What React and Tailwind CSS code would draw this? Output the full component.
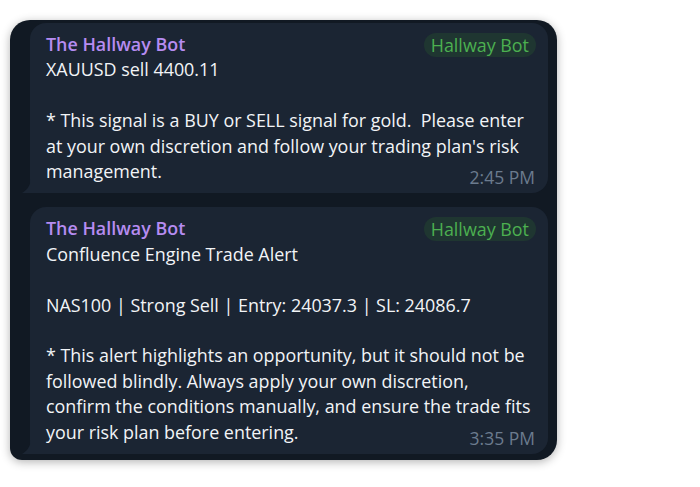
export default function App() {
  return (
    <div className="min-h-[487px] w-[700px] bg-white pl-[10px] pt-[20px] font-['Open_Sans',sans-serif]">
      <div className="flex w-[547px] flex-col gap-[14px] rounded-[20px] rounded-bl-[12px] bg-[#111923] pb-[6px] pl-[20px] pr-[9px] pt-[3px] shadow-[0_2px_10px_rgba(0,0,0,0.3)]">
        <Message time="2:45 PM">
          <p>XAUUSD sell 4400.11</p>
          <p>&nbsp;</p>
          <p>
            * This signal is a BUY or SELL signal for gold.&nbsp; Please enter
            at your own discretion and follow your trading plan's risk
            management.
          </p>
        </Message>
        <Message time="3:35 PM">
          <p>Confluence Engine Trade Alert</p>
          <p>&nbsp;</p>
          <p>NAS100 | Strong Sell | Entry: 24037.3 | SL: 24086.7</p>
          <p>&nbsp;</p>
          <p>
            * This alert highlights an opportunity, but it should not be
            followed blindly. Always apply your own discretion, confirm the
            conditions manually, and ensure the trade fits your risk plan
            before entering.
          </p>
        </Message>
      </div>
    </div>
  );
}

function Message({ time, children }) {
  return (
    <div className="relative rounded-[16px] rounded-bl-none bg-[#1b2533] pb-[5px] pl-[16px] pr-[13px] pt-[9px] text-[17.9px] leading-[25.4px] text-[#f2f4f7]">
      <svg
        className="absolute bottom-0 left-[-9px]"
        width="10"
        height="14"
        viewBox="0 0 10 14"
      >
        <path d="M10 0 V14 H1 C4 12 9 9 10 0 Z" fill="#1b2533" />
      </svg>
      <div className="flex items-center justify-between">
        <span className="font-semibold text-[#b68cf1]">The Hallway Bot</span>
        <span className="-mr-[1px] rounded-full bg-[#1f3631] px-[7px] leading-[24px] text-[#4cb050]">
          Hallway Bot
        </span>
      </div>
      <div className="w-[487px]">{children}</div>
      <div className="-mt-[18px] text-right text-[17.5px] leading-[22px] text-[#6b7b8e]">
        {time}
      </div>
    </div>
  );
}
